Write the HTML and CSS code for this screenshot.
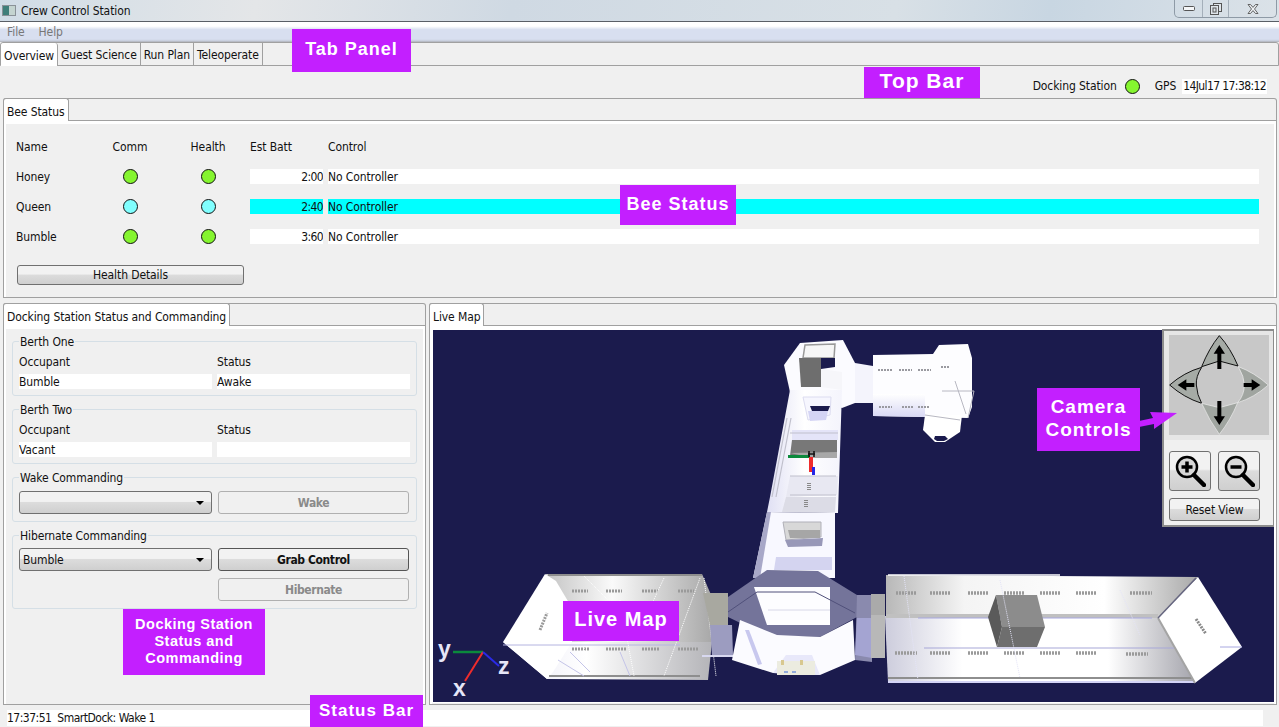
FILE: index.html
```html
<!DOCTYPE html>
<html lang="en">
<head>
    <meta charset="UTF-8">
    <meta name="viewport" content="width=device-width, initial-scale=1.0">
    <title>Crew Control Station</title>
    <link rel="stylesheet" href="styles.css">
</head>
<body>
    <div class="window">
        <!-- Window chrome -->
        <div class="title-bar">
            <div class="app-icon"></div>
            <span class="title-text">Crew Control Station</span>
            <div class="win-buttons">
                <div class="win-btn win-min">
                    <svg width="12" height="6" viewBox="0 0 12 6"><rect x="0.5" y="0.5" width="11" height="4" rx="1" fill="#f4f6f8" stroke="#555"/></svg>
                </div>
                <div class="win-btn win-max">
                    <svg width="12" height="12" viewBox="0 0 12 12"><rect x="3.5" y="0.5" width="8" height="8" fill="#dfe5ea" stroke="#555"/><rect x="0.5" y="2.5" width="8" height="9" fill="#dfe5ea" stroke="#555"/><rect x="3" y="5" width="3" height="4" fill="none" stroke="#555"/></svg>
                </div>
                <div class="win-btn win-close">
                    <svg width="12" height="10" viewBox="0 0 12 10"><path d="M1 0.5h2.5L6 3.4 8.500 0.500H11L7.500 5 11 9.500H8.500L6 6.600 3.500 9.500H1L4.500 5z" fill="#eef1f4" stroke="#555" stroke-width="0.9"/></svg>
                </div>
            </div>
        </div>
        <div class="menu-bar">
            <span>File</span>
            <span>Help</span>
        </div>

        <!-- Main tabs -->
        <div class="tab-head main-tabs">
            <div class="tab selected">Overview</div>
            <div class="tab">Guest Science</div>
            <div class="tab">Run Plan</div>
            <div class="tab">Teleoperate</div>
        </div>
        <div class="overview">
            <div class="top-bar">
                <span>Docking Station</span>
                <span class="dot green"></span>
                <span class="gps-label">GPS</span>
                <span class="gps-time">14Jul17 17:38:12</span>
            </div>

            <!-- Bee status -->
            <div class="panel bee-panel">
                <div class="tab-head">
                    <div class="tab selected">Bee Status</div>
                </div>
                <div class="panel-body">
                    <div class="bee-grid">
                        <div>Name</div>
                        <div class="center">Comm</div>
                        <div class="center">Health</div>
                        <div>Est Batt</div>
                        <div>Control</div>

                        <div>Honey</div>
                        <div class="center"><span class="dot green"></span></div>
                        <div class="center"><span class="dot green"></span></div>
                        <div class="field right">2:00</div>
                        <div class="field">No Controller</div>

                        <div>Queen</div>
                        <div class="center"><span class="dot cyan"></span></div>
                        <div class="center"><span class="dot cyan"></span></div>
                        <div class="field right active">2:40</div>
                        <div class="field active">No Controller</div>

                        <div>Bumble</div>
                        <div class="center"><span class="dot green"></span></div>
                        <div class="center"><span class="dot green"></span></div>
                        <div class="field right">3:60</div>
                        <div class="field">No Controller</div>
                    </div>
                    <button class="btn health-btn">Health Details</button>
                </div>
            </div>

            <div class="lower">
                <!-- Docking station -->
                <div class="panel dock-panel">
                    <div class="tab-head">
                        <div class="tab selected">Docking Station Status and Commanding</div>
                    </div>
                    <div class="panel-body">
                        <fieldset class="group">
                            <legend>Berth One</legend>
                            <div class="berth-grid">
                                <div>Occupant</div>
                                <div>Status</div>
                                <div class="field">Bumble</div>
                                <div class="field">Awake</div>
                            </div>
                        </fieldset>
                        <fieldset class="group">
                            <legend>Berth Two</legend>
                            <div class="berth-grid">
                                <div>Occupant</div>
                                <div>Status</div>
                                <div class="field">Vacant</div>
                                <div class="field"></div>
                            </div>
                        </fieldset>
                        <fieldset class="group wake-group">
                            <legend>Wake Commanding</legend>
                            <div class="command-grid">
                                <div class="combo"><span></span><i class="caret"></i></div>
                                <button class="btn bold disabled">Wake</button>
                            </div>
                        </fieldset>
                        <fieldset class="group hibernate-group">
                            <legend>Hibernate Commanding</legend>
                            <div class="command-grid">
                                <div class="combo"><span>Bumble</span><i class="caret"></i></div>
                                <button class="btn bold dark">Grab Control</button>
                                <div></div>
                                <button class="btn bold disabled">Hibernate</button>
                            </div>
                        </fieldset>
                    </div>
                </div>

                <!-- Live map -->
                <div class="panel map-panel">
                    <div class="tab-head">
                        <div class="tab selected">Live Map</div>
                    </div>
                    <div class="panel-body">
                        <div class="map-view">
                            <svg class="map-svg" width="841" height="372" viewBox="433 330 841 372">
                                <defs>
                                    <linearGradient id="leftTop" x1="0" x2="1" y1="0" y2="0">
                                        <stop offset="0" stop-color="#c4c4c4"/>
                                        <stop offset="0.4" stop-color="#fafafa"/>
                                        <stop offset="1" stop-color="#a8a8a8"/>
                                    </linearGradient>
                                    <linearGradient id="leftBottom" x1="0" x2="1" y1="0" y2="0">
                                        <stop offset="0" stop-color="#e8e8f4"/>
                                        <stop offset="0.4" stop-color="#ffffff"/>
                                        <stop offset="1" stop-color="#b4b4b8"/>
                                    </linearGradient>
                                    <linearGradient id="rightTop" x1="0" x2="1" y1="0" y2="0">
                                        <stop offset="0" stop-color="#b8b8b8"/>
                                        <stop offset="0.25" stop-color="#f4f4f4"/>
                                        <stop offset="0.7" stop-color="#ffffff"/>
                                        <stop offset="1" stop-color="#a8a8a8"/>
                                    </linearGradient>
                                    <linearGradient id="rightBottom" x1="0" x2="1" y1="0" y2="0">
                                        <stop offset="0" stop-color="#ccccdc"/>
                                        <stop offset="0.25" stop-color="#ffffff"/>
                                        <stop offset="0.72" stop-color="#ffffff"/>
                                        <stop offset="1" stop-color="#a4a4ac"/>
                                    </linearGradient>
                                    <linearGradient id="corridor" x1="0" x2="1" y1="0" y2="0">
                                        <stop offset="0" stop-color="#e0e0f4"/>
                                        <stop offset="0.5" stop-color="#ffffff"/>
                                        <stop offset="1" stop-color="#f4f4fc"/>
                                    </linearGradient>
                                    <linearGradient id="lavender" x1="0" x2="0" y1="0" y2="1">
                                        <stop offset="0" stop-color="#ffffff"/>
                                        <stop offset="1" stop-color="#d8d8f4"/>
                                    </linearGradient>
                                </defs>

                                <!-- right upper module -->
                                <polygon points="855,363 873,366 873,403 855,403" fill="#f4f4fc"/>
                                <polygon points="873,355 933,354 939,345 968,344 972,358 972,407 968,418 925,417 873,416" fill="#fdfdff"/>
                                <polygon points="873,394 925,394 925,417 873,416" fill="url(#lavender)"/>
                                <polygon points="925,415 962,415 960,432 945,442 935,442 923,430" fill="#fff"/>
                                <polygon points="935,436 945,436 948,439 944,441 937,441 934,439" fill="#1b1b4d"/>
                                <path d="M925,415 L960,420 M942,391 L974,391 L968,418 M955,381 L966,414" stroke="#b8b8c2" stroke-width="1" fill="none"/>
                                <path d="M878,370 H892 M899,370 H912 M918,370 H931 M941,367 H949 M879,407 H892 M902,407 H913 M918,407 H930" stroke="#9a9aa0" stroke-width="2" stroke-dasharray="2 1" fill="none"/>

                                <!-- top node -->
                                <polygon points="800,343 843,340 855,363 855,403 842,408 790,392 784,365" fill="#fbfbff"/>
                                <polygon points="805,345 835,344 834,358 803,358" fill="#f6f6f6" stroke="#999" stroke-width="1.500"/>
                                <polygon points="799,358 821,358 821,387 801,387" fill="#6e6e6e"/>
                                <polygon points="821,358 835,358 835,367 821,369" fill="#1b1b4d"/>
                                <polygon points="821,369 842,372 842,390 821,387" fill="#f6f6fa"/>

                                <!-- upper corridor -->
                                <polygon points="790,390 842,390 838,513 767,512 770,497" fill="url(#corridor)"/>
                                <polygon points="803,397 831,397 830,415 808,420" fill="#f6f6fe" stroke="#dcdcf0"/>
                                <polygon points="810,406 830,406 828,411 812,411" fill="#1b1b4d"/>
                                <polygon points="808,411 828,411 826,420 810,421" fill="#d4d4f4"/>
                                <polygon points="792,430 838,430 838,440 792,440" fill="#e4e4f8"/>
                                <polygon points="792,440 837,440 837,458 790,456" fill="#787878"/>
                                <polygon points="790,453 837,452 837,458 813,458" fill="#a8a8a8"/>
                                <polygon points="790,476 838,476 837,495 786,497" fill="#e8e8f2"/>
                                <polygon points="786,497 836,497 835,512 782,512" fill="#dcdce6"/>
                                <path d="M787,418 L772,497 M791,418 L776,497 M790,433 H838 M790,476 H836 M790,495 H836" stroke="#c0c0cc" stroke-width="1.200" fill="none"/>
                                <path d="M809,483 V491 M806,500 V508" stroke="#888" stroke-width="4" stroke-dasharray="1 1" fill="none"/>
                                <rect x="788" y="455" width="22" height="3" fill="#0b8a3c"/>
                                <rect x="809" y="457" width="4" height="15" fill="#ef2c2c"/>
                                <rect x="812" y="467" width="3" height="8" fill="#2626e6"/>
                                <path d="M808,454 h7 M809,451 v6 M814,451 v6" stroke="#111" stroke-width="1.500" fill="none"/>

                                <!-- lower corridor -->
                                <polygon points="767,512 835,513 835,578 753,578" fill="#f8f8ff"/>
                                <polygon points="767,512 771,512 760,578 753,578" fill="#a8a8c8"/>
                                <polygon points="783,522 821,522 821,537 786,540" fill="#d8d8d8" stroke="#b0b0b8"/>
                                <polygon points="788,530 820,530 820,538 790,538" fill="#a6a6a6"/>
                                <polygon points="785,540 823,538 822,546 788,547" fill="#9898b8"/>
                                <polygon points="776,557 832,557 832,570 774,570" fill="#d4d4f0"/>

                                <!-- left module -->
                                <polygon points="546,574 702,574 712,597 712,642 546,642" fill="url(#leftTop)"/>
                                <polygon points="503,642 712,642 708,680 547,679" fill="url(#leftBottom)"/>
                                <polygon points="503,642 545,574 556,581 572,608 572,642" fill="#ffffff"/>
                                <polygon points="503,642 572,642 553,672 547,679" fill="#ffffff"/>
                                <path d="M548,575 H702 M549,676 H700" stroke="#8e8e8e" stroke-width="2" fill="none"/>
                                <path d="M503,645 H680" stroke="#b4b4e0" stroke-width="1" fill="none"/>
                                <path d="M572,591 H588 M606,591 H622 M642,591 H658 M678,591 H694 M572,649 H590 M606,649 H626 M642,649 H660 M678,649 H698" stroke="#9a9a9a" stroke-width="3" stroke-dasharray="2 1" fill="none"/>
                                <path d="M540,630 L547,613" stroke="#9a9a9a" stroke-width="3" stroke-dasharray="2 1" fill="none"/>
                                <path d="M584,576 L608,600 M584,648 L586,676 M620,600 L634,676 M664,578 L650,608 M700,578 L664,676 M704,578 L716,676" stroke="#fff" stroke-width="1" stroke-dasharray="1 1" fill="none"/>
                                <path d="M558,660 L584,676 M570,652 L590,672 M620,652 L630,676" stroke="#c4c4e8" stroke-width="1" fill="none"/>

                                <!-- connector to centre -->
                                <polygon points="703,593 728,593 728,625 710,625" fill="#a8a8a0"/>
                                <polygon points="710,625 732,625 733,655 712,655" fill="#9c9cc0"/>
                                <polygon points="702,655 733,655 733,657 702,657" fill="#d8d8f0"/>

                                <!-- centre node -->
                                <polygon points="728,597 767,570 818,571 857,595 857,617 820,637 767,636 728,617" fill="#74749a"/>
                                <polygon points="754,587 830,587 830,625 767,625" fill="#fdfdff"/>
                                <path d="M728,612 L757,592 H815 L855,613" stroke="#50507a" stroke-width="1" fill="none"/>
                                <path d="M768,610 H830" stroke="#d8d8e8" stroke-width="1" fill="none"/>
                                <polygon points="732,660 740,620 777,635 820,637 853,620 855,660 820,675 773,673" fill="#fbfbff"/>
                                <polygon points="745,630 749,630 762,664 758,665" fill="#c8c8ee"/>
                                <polygon points="773,673 786,655 812,655 820,675" fill="#e8e8fa"/>
                                <rect x="777" y="661" width="38" height="14" fill="#ecece0"/>
                                <rect x="781" y="660" width="3" height="5" fill="#d8c890"/>
                                <rect x="800" y="660" width="3" height="5" fill="#d8c890"/>
                                <path d="M784,672 h4 M792,672 h4" stroke="#3a6ad8" stroke-width="1"/>
                                <polygon points="857,595 872,595 872,662 855,660" fill="#8a8aae"/>
                                <polygon points="857,618 872,618 872,658 855,655" fill="#a4a4d2"/>
                                <polygon points="871,594 885,594 885,615 871,615" fill="#aaa"/>
                                <polygon points="871,615 885,615 885,658 871,658" fill="#b8b8b8"/>

                                <!-- right module -->
                                <polygon points="886,575 1198,577 1160,617 886,616" fill="url(#rightTop)"/>
                                <polygon points="885,616 1158,618 1195,683 888,682" fill="url(#rightBottom)"/>
                                <rect x="886" y="614" width="272" height="4" fill="#c0c0c0"/>
                                <path d="M918,618 H1152" stroke="#a8a8e0" stroke-width="1"/>
                                <path d="M924,648 H1176" stroke="#a8a8d8" stroke-width="1.200"/>
                                <path d="M888,678 H1192" stroke="#8e8e8e" stroke-width="2"/>
                                <path d="M888,682 H1195" stroke="#d4d4f6" stroke-width="2"/>
                                <path d="M888,575 H1060" stroke="#fff" stroke-width="1.500"/>
                                <polygon points="1198,577 1242,647 1195,683 1158,618" fill="#ffffff"/>
                                <path d="M1158,618 L1195,683" stroke="#a4a4a4" stroke-width="2"/>
                                <path d="M1158,618 L1196,578" stroke="#666680" stroke-width="1.500"/>
                                <path d="M1220,647 H1242" stroke="#a8a8e0"/>
                                <path d="M896,593 H917 M930,593 H950 M968,593 H988 M1004,593 H1024 M1040,593 H1060 M1076,593 H1096 M1130,593 H1152 M895,653 H917 M930,653 H950 M968,653 H988 M1004,653 H1024 M1040,653 H1060 M1076,653 H1096 M1126,654 H1148" stroke="#9a9a9a" stroke-width="3.500" stroke-dasharray="2 1" fill="none"/>
                                <path d="M1196,619 L1206,634" stroke="#888" stroke-width="3" stroke-dasharray="2 1" fill="none"/>
                                <polygon points="996,595 1037,595 1045,627 1002,627" fill="#8c8c8c"/>
                                <polygon points="1002,627 1045,627 1037,647 997,647" fill="#6e6e6e"/>
                                <polygon points="996,595 988,617 997,647 1002,627" fill="#5a5a5a"/>
                                <path d="M904,576 L918,680 M1000,580 L1020,678 M1120,590 L1140,635" stroke="#e4e4f8" stroke-width="1" stroke-dasharray="1 1" fill="none"/>

                                <!-- axes -->
                                <line x1="483" y1="652" x2="453" y2="652" stroke="#0b8a3c" stroke-width="2.500"/>
                                <line x1="483" y1="652" x2="465" y2="681" stroke="#ef2c2c" stroke-width="2"/>
                                <line x1="483" y1="652" x2="499" y2="666" stroke="#2a2ae6" stroke-width="2"/>
                                <text class="axis-label" x="438" y="657">y</text>
                                <text class="axis-label" x="498" y="674">z</text>
                                <text class="axis-label" x="453" y="696">x</text>
                            </svg>

                            <!-- Camera controls overlay -->
                            <div class="camera">
                                <div class="dpad-wrap">
                                    <svg class="dpad" width="100" height="100" viewBox="0 0 300 300">
                                        <g stroke="#111" stroke-width="3" fill="#a6aba6">
                                            <path d="M151 2 Q185 40 207 93 L151 78 L98 95 Q120 40 151 2z"/>
                                            <path d="M2 150 Q45 112 98 97 Q80 125 82 150 Q84 180 98 205 Q45 188 2 150z"/>
                                        </g>
                                        <g stroke="#eee" stroke-width="2" fill="#a0a5a0">
                                            <path d="M298 150 Q255 112 208 95 Q226 125 226 150 Q226 180 206 203 Q255 188 298 150z"/>
                                            <path d="M151 298 Q120 255 98 205 L151 218 L206 203 Q185 255 151 298z"/>
                                        </g>
                                        <g fill="#000">
                                            <path d="M151 30 L168 56 H157 V102 H145 V56 H134z"/>
                                            <path d="M151 270 L168 244 H157 V198 H145 V244 H134z"/>
                                            <path d="M26 150 L52 133 V144 H76 V156 H52 V167z"/>
                                            <path d="M274 150 L248 133 V144 H224 V156 H248 V167z"/>
                                        </g>
                                    </svg>
                                </div>
                                <div class="zoom-row">
                                    <button class="btn zoom-btn">
                                        <svg width="32" height="32" viewBox="0 0 32 32"><circle cx="13" cy="12" r="10" fill="#d8d8d8" stroke="#000" stroke-width="2.500"/><path d="M20 20 L30 30" stroke="#000" stroke-width="4.500" stroke-linecap="round"/><path d="M13 6.500 V17.500 M7.500 12 H18.500" stroke="#000" stroke-width="3.500"/></svg>
                                    </button>
                                    <button class="btn zoom-btn">
                                        <svg width="32" height="32" viewBox="0 0 32 32"><circle cx="13" cy="12" r="10" fill="#d8d8d8" stroke="#000" stroke-width="2.500"/><path d="M20 20 L30 30" stroke="#000" stroke-width="4.500" stroke-linecap="round"/><path d="M7.500 12 H18.500" stroke="#000" stroke-width="3.500"/></svg>
                                    </button>
                                </div>
                                <button class="btn reset-btn">Reset View</button>
                            </div>
                        </div>
                    </div>
                </div>
            </div>
        </div>

        <div class="status-bar">
            <div class="status-text">17:37:51&nbsp; SmartDock: Wake 1</div>
        </div>

        <!-- Magenta callouts -->
        <div class="callout tab-note">Tab Panel</div>
        <div class="callout topbar-note">Top Bar</div>
        <div class="callout bee-note">Bee Status</div>
        <div class="callout dock-note">Docking Station<br>Status and<br>Commanding</div>
        <div class="callout map-note">Live Map</div>
        <div class="callout status-note">Status Bar</div>
        <div class="callout camera-note">Camera<br>Controls</div>
        <svg class="camera-arrow" width="40" height="24" viewBox="0 0 40 24"><path d="M0 14 L14 11 L11 5 L38 6 L15 22 L15 17 L0 20z" fill="#c31fff"/></svg>
    </div>
</body>
</html>
```

FILE: styles.css
```css
* {
    box-sizing: border-box;
}
body {
    margin: 0;
    font-family: "DejaVu Sans Condensed", "DejaVu Sans", sans-serif;
    font-stretch: condensed;
    font-size: 12px;
    letter-spacing: -0.1px;
    color: #111;
    background-color: #f0f0f0;
}
.window {
    position: relative;
    width: 1279px;
    height: 727px;
    overflow: hidden;
    display: flex;
    flex-direction: column;
}

/* window chrome */
.title-bar {
    height: 22px;
    flex: none;
    display: flex;
    align-items: center;
    padding-left: 2px;
    border-bottom: 1px solid #5a5f66;
    background: linear-gradient(100deg, #d0dce6 0%, #e4e6e8 20%, #cfd9e3 40%, #d8e0e6 70%, #c8d6e2 82%, #dbe2e8 100%);
}
.app-icon {
    width: 14px;
    height: 11px;
    margin-right: 5px;
    background: linear-gradient(90deg, #3f7f7a 0 50%, #c4d4d0 50% 100%);
    border: 1px solid #8a9298;
}
.title-text {
    color: #111;
}
.win-buttons {
    display: flex;
    align-self: flex-start;
    margin-left: auto;
    margin-right: 2px;
    height: 18px;
    border: 1px solid #8e9aa6;
    border-top: none;
    border-radius: 0 0 5px 5px;
}
.win-btn {
    display: flex;
    align-items: center;
    justify-content: center;
    border-right: 1px solid #a4afba;
}
.win-min {
    width: 28px;
}
.win-max {
    width: 26px;
}
.win-close {
    width: 47px;
    border-right: none;
}
.menu-bar {
    height: 20px;
    flex: none;
    display: flex;
    align-items: center;
    gap: 14px;
    padding-left: 7px;
    color: #777;
    border-bottom: 1px solid #b8bcc6;
    background: linear-gradient(#ffffff 0 22%, #d8dff0 40%, #d8dff0 90%, #c6ccda 100%);
}

/* tabs */
.tab-head {
    display: flex;
    height: 23px;
    flex: none;
    border: 1px solid #a0a0a0;
    border-radius: 3px 3px 0 0;
    border-left: none;
}
.main-tabs {
    height: 24px;
    border-left: 1px solid #a0a0a0;
}
.tab {
    display: flex;
    align-items: center;
    padding: 2px 3px 0;
    border-right: 1px solid #a0a0a0;
    white-space: nowrap;
}
.tab.selected {
    height: 23px;
    background-color: #fff;
    border-radius: 3px 3px 0 0;
}
.panel .tab.selected {
    border-left: 1px solid #a0a0a0;
    padding-left: 3px;
    margin-top: -1px;
    margin-bottom: -1px;
    height: 24px;
    border-top: 1px solid #a0a0a0;
}
.overview {
    flex: 1;
    display: flex;
    flex-direction: column;
    padding: 0 2px 0 3px;
}
.top-bar {
    height: 32px;
    flex: none;
    display: flex;
    align-items: center;
    justify-content: flex-end;
    padding: 8px 10px 0 0;
}
.gps-label {
    margin-left: 15px;
}
.gps-time {
    margin-left: 6px;
    padding: 0 1px;
    height: 15px;
    line-height: 15px;
    letter-spacing: -0.6px;
    background-color: #fff;
}
.top-bar .dot {
    margin-left: 8px;
}

/* panels */
.panel {
    display: flex;
    flex-direction: column;
    min-width: 0;
}
.panel-body {
    flex: 1;
    border: 1px solid #a0a0a0;
    border-top: none;
    box-shadow: inset 0 3px 0 #fff, inset 2px 0 0 #fff, inset -2px 0 0 #fff;
}
.bee-panel {
    height: 200px;
    flex: none;
}
.bee-panel .panel-body {
    padding: 18px 17px 0 12px;
}
.bee-grid {
    display: grid;
    grid-template-columns: 73px 72px 74px 73px 1fr;
    grid-auto-rows: 15px;
    column-gap: 5px;
    row-gap: 15px;
    line-height: 17px;
}
.center {
    display: flex;
    align-items: flex-start;
    justify-content: center;
}
.field {
    height: 15px;
    line-height: 17px;
    overflow: hidden;
    background-color: #fff;
    white-space: nowrap;
}
.right {
    text-align: right;
    letter-spacing: -0.6px;
}
.active {
    background-color: #00ffff;
}
.dot {
    display: inline-block;
    width: 15px;
    height: 15px;
    border-radius: 50%;
    border: 1.500px solid #111;
}
.green {
    background-color: #85f52f;
}
.cyan {
    background-color: #80ffff;
}
.btn {
    font-family: inherit;
    font-stretch: inherit;
    font-size: 12px;
    letter-spacing: inherit;
    color: #111;
    border: 1px solid #707070;
    border-radius: 3px;
    padding: 0;
    background: linear-gradient(#f2f2f2 0 45%, #dcdcdc 50%, #cfcfcf 100%);
}
.health-btn {
    display: block;
    width: 227px;
    height: 20px;
    margin: 21px 0 0 1px;
}

/* docking station */
.lower {
    height: 402px;
    flex: none;
    display: flex;
    gap: 3px;
    margin-top: 5px;
}
.dock-panel {
    width: 423px;
    flex: none;
}
.dock-panel .panel-body {
    padding: 8px 8px 0 8px;
    display: flex;
    flex-direction: column;
    gap: 6px;
}
.group {
    margin: 0;
    padding: 5px 6px 6px 6px;
    border: 1px solid #d5dfe6;
    border-radius: 3px;
    min-width: 0;
}
.wake-group {
    padding-top: 6px;
    padding-bottom: 7px;
}
.hibernate-group {
    padding-bottom: 7px;
}
.group legend {
    margin-left: 0;
    padding: 0 1px;
    height: 15px;
    line-height: 17px;
}
.berth-grid {
    display: grid;
    grid-template-columns: 193px 193px;
    grid-auto-rows: 15px;
    column-gap: 5px;
    row-gap: 5px;
    line-height: 17px;
}
.command-grid {
    display: grid;
    grid-template-columns: 193px 191px;
    column-gap: 6px;
    row-gap: 7px;
}
.combo {
    height: 23px;
    display: flex;
    align-items: center;
    justify-content: space-between;
    padding: 0 7px 0 3px;
    border: 1px solid #707070;
    border-radius: 3px;
    background: linear-gradient(#f2f2f2 0 45%, #dcdcdc 50%, #cfcfcf 100%);
}
.caret {
    width: 0;
    height: 0;
    border-left: 4px solid transparent;
    border-right: 4px solid transparent;
    border-top: 4px solid #000;
}
.bold {
    font-weight: bold;
    letter-spacing: -0.4px;
    height: 23px;
}
.dark {
    border-color: #555;
}
.disabled {
    color: #8a8a8a;
    border-color: #b0b0b0;
    background: #f0f0f0;
}

/* live map */
.map-panel {
    flex: 1;
}
.map-panel .panel-body {
    padding: 4px 2px 2px 3px;
}
.map-view {
    position: relative;
    height: 372px;
    background-color: #1b1b4d;
    outline: 1px solid #fff;
}
.map-svg {
    display: block;
}
.axis-label {
    font-family: "Liberation Sans", Arial, sans-serif;
    font-size: 23px;
    font-weight: bold;
    letter-spacing: 0;
    fill: #e6e6f8;
}
.camera {
    position: absolute;
    top: -1px;
    right: 0;
    width: 112px;
    height: 198px;
    background-color: #f0f0f0;
    border: 2px solid #8c8c8c;
    border-right-width: 1px;
}
.dpad-wrap {
    padding: 4px 5px;
    height: 109px;
    background-color: #e6e6e6;
}
.dpad {
    display: block;
    background-color: #c8c8c8;
}
.zoom-row {
    display: flex;
    gap: 7px;
    margin: 11px 0 0 5px;
}
.zoom-btn {
    width: 42px;
    height: 40px;
    display: flex;
    align-items: center;
    justify-content: center;
}
.reset-btn {
    display: block;
    width: 91px;
    height: 23px;
    margin: 7px 0 0 5px;
}

/* status bar */
.status-bar {
    height: 20px;
    flex: none;
    padding: 3px 16px 1px 7px;
}
.status-text {
    height: 16px;
    line-height: 16px;
    letter-spacing: -0.5px;
    background-color: #fff;
}

/* callouts */
.callout {
    position: absolute;
    display: flex;
    align-items: center;
    justify-content: center;
    text-align: center;
    font-family: "Liberation Sans", Arial, sans-serif;
    font-stretch: normal;
    font-weight: bold;
    font-size: 20px;
    letter-spacing: 1px;
    line-height: 23px;
    color: #fff;
    background-color: #c31fff;
    padding-bottom: 3px;
}
.tab-note {
    left: 292px;
    top: 29px;
    width: 119px;
    height: 43px;
    font-size: 18px;
    padding-bottom: 2px;
}
.topbar-note {
    left: 864px;
    top: 67px;
    width: 116px;
    height: 31px;
    font-size: 21px;
    padding-bottom: 4px;
}
.bee-note {
    left: 620px;
    top: 185px;
    width: 116px;
    height: 40px;
    font-size: 18px;
    padding-bottom: 2px;
}
.dock-note {
    left: 123px;
    top: 609px;
    width: 142px;
    height: 66px;
    font-size: 14.500px;
    line-height: 17px;
    letter-spacing: 0.500px;
    padding-bottom: 1px;
}
.map-note {
    left: 563px;
    top: 601px;
    width: 116px;
    height: 40px;
}
.status-note {
    left: 310px;
    top: 695px;
    width: 113px;
    height: 32px;
    font-size: 17px;
    padding-bottom: 1px;
}
.camera-note {
    left: 1037px;
    top: 388px;
    width: 103px;
    height: 63px;
    font-size: 19px;
}
.camera-arrow {
    position: absolute;
    left: 1139px;
    top: 407px;
}
```
